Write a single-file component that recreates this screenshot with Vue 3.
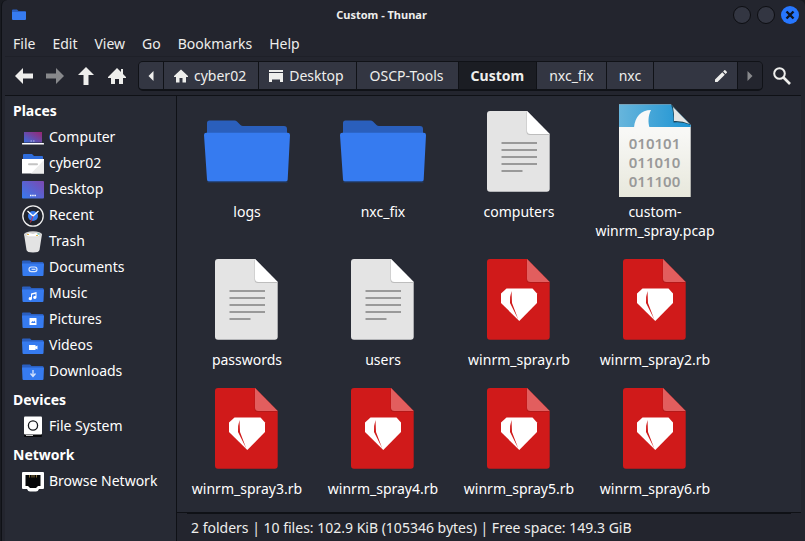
<script setup>
const menus = ['File', 'Edit', 'View', 'Go', 'Bookmarks', 'Help']

const groups = [
  {
    title: 'Places',
    items: [
      { name: 'Computer', icon: 'computer' },
      { name: 'cyber02', icon: 'home' },
      { name: 'Desktop', icon: 'desktop' },
      { name: 'Recent', icon: 'recent' },
      { name: 'Trash', icon: 'trash' },
      { name: 'Documents', icon: 'folder', badge: 'documents' },
      { name: 'Music', icon: 'folder', badge: 'music' },
      { name: 'Pictures', icon: 'folder', badge: 'pictures' },
      { name: 'Videos', icon: 'folder', badge: 'videos' },
      { name: 'Downloads', icon: 'folder', badge: 'downloads' },
    ],
  },
  { title: 'Devices', items: [{ name: 'File System', icon: 'drive' }] },
  { title: 'Network', items: [{ name: 'Browse Network', icon: 'network' }] },
]

const files = [
  { name: 'logs', type: 'folder' },
  { name: 'nxc_fix', type: 'folder' },
  { name: 'computers', type: 'text' },
  { name: 'custom-winrm_spray.pcap', type: 'pcap' },
  { name: 'passwords', type: 'text' },
  { name: 'users', type: 'text' },
  { name: 'winrm_spray.rb', type: 'ruby' },
  { name: 'winrm_spray2.rb', type: 'ruby' },
  { name: 'winrm_spray3.rb', type: 'ruby' },
  { name: 'winrm_spray4.rb', type: 'ruby' },
  { name: 'winrm_spray5.rb', type: 'ruby' },
  { name: 'winrm_spray6.rb', type: 'ruby' },
]

const binaryRows = [
  { y: 46, bits: '010101' },
  { y: 65, bits: '011010' },
  { y: 84, bits: '011100' },
]
</script>

<template>
  <div class="window">
    <header class="titlebar">
      <svg class="app-icon" viewBox="0 0 14 12">
        <path d="M0 1.500Q0 .5 1 .5h4l1.500 1.500H13q1 0 1 1V6H0z" fill="#2a5fc0" />
        <path d="M0 3h14v7q0 1-1 1H1q-1 0-1-1z" fill="#367bf0" />
      </svg>
      <h1 class="title">Custom - Thunar</h1>
      <div class="controls">
        <button class="control" aria-label="Minimize"></button>
        <button class="control" aria-label="Maximize"></button>
        <button class="control close" aria-label="Close">
          <svg viewBox="0 0 18 18"><path d="M5.500 5.500l7 7M12.500 5.500l-7 7" stroke="#10141f" stroke-width="2.400" /></svg>
        </button>
      </div>
    </header>

    <nav class="menubar">
      <button v-for="menu in menus" :key="menu" class="menu">{{ menu }}</button>
    </nav>

    <div class="toolbar">
      <button class="tool" aria-label="Back">
        <svg viewBox="0 0 18 18"><path d="M0 9l8-8v5.500h10v5H8V17z" /></svg>
      </button>
      <button class="tool" aria-label="Forward" disabled>
        <svg viewBox="0 0 18 18"><path d="M18 9l-8-8v5.500H0v5h10V17z" /></svg>
      </button>
      <button class="tool" aria-label="Up">
        <svg viewBox="0 0 18 18"><path d="M9 0l8 8h-5.500v10h-5V8H1z" /></svg>
      </button>
      <button class="tool" aria-label="Home">
        <svg viewBox="0 0 18 18"><path d="M9 1l4 4V2h2v5l3 3v1h-3v6h-4v-5H7v5H3v-6H0v-1z" /></svg>
      </button>

      <div class="pathbar">
        <button class="crumb scroll" aria-label="Scroll left">
          <svg class="caret" viewBox="0 0 6 10"><path d="M5.500 0v10L0.500 5z" /></svg>
        </button>
        <button class="crumb with-icon">
          <svg class="crumb-icon" viewBox="0 0 14 14"><path d="M7 .5L14 7v1h-2v5.500H8.500V9h-3v4.500H2V8H0V7z" /></svg>
          cyber02
        </button>
        <button class="crumb with-icon">
          <svg class="crumb-icon" viewBox="0 0 14 14"><path d="M0 1h14v2H0zM0 4h14v9h-3v-2.500H3V13H0z" /></svg>
          Desktop
        </button>
        <button class="crumb parent">OSCP-Tools</button>
        <button class="crumb current">Custom</button>
        <button class="crumb">nxc_fix</button>
        <button class="crumb">nxc</button>
        <button class="crumb edit" aria-label="Edit path">
          <svg class="crumb-icon" viewBox="0 0 14 14"><path d="M1 10.500V13h2.500L10.800 5.700 8.300 3.200zM9.100 2.400l2.500 2.500 1.200-1.200q.5-.5 0-1L11.300 1.200q-.5-.5-1 0z" /></svg>
        </button>
        <button class="crumb scroll off" aria-label="Scroll right" disabled>
          <svg class="caret" viewBox="0 0 6 10"><path d="M.5 0v10L5.500 5z" /></svg>
        </button>
      </div>

      <button class="tool search" aria-label="Search">
        <svg viewBox="0 0 18 18">
          <circle cx="6.500" cy="6.500" r="5.300" fill="none" stroke="#eeeeec" stroke-width="2" />
          <path d="M10.500 10.500l6.500 6.500" stroke="#eeeeec" stroke-width="2.600" />
        </svg>
      </button>
    </div>

    <div class="body">
      <aside class="sidebar">
        <section v-for="group in groups" :key="group.title">
          <h2 class="group-title">{{ group.title }}</h2>
          <a v-for="item in group.items" :key="item.name" class="place" href="#">
            <svg class="place-icon" viewBox="0 0 22 22">
              <g v-if="item.icon === 'computer'">
                <rect x="2" y="5" width="18" height="10.500" fill="url(#screen)" />
                <path d="M8.500 14h1.500M11 14h1.500" stroke="#b9bfe6" />
                <rect y="16" width="22" height="1.500" rx=".5" fill="#fff" />
              </g>
              <g v-else-if="item.icon === 'home'">
                <path d="M1 2q0-1 1-1h8l2 2h8q1 0 1 1v5H1z" fill="#2f6ddb" />
                <path d="M0 6h22v14.500H0z" fill="#fff" />
                <path d="M22 7v13.500H9z" fill="#ececec" />
                <rect x="6" y="10.300" width="10" height="2" rx="1" fill="#c4c4c4" />
              </g>
              <g v-else-if="item.icon === 'desktop'">
                <rect y="2" width="22" height="17.500" rx="1" fill="url(#wall)" />
                <path d="M8 16.500h6" stroke="#fff" stroke-width="1.400" stroke-dasharray="1.500 .7" />
              </g>
              <g v-else-if="item.icon === 'recent'">
                <circle cx="11" cy="11" r="10.200" fill="#20232c" stroke="#f0f0f0" stroke-width="1.300" />
                <circle cx="11" cy="11" r="5" fill="#367bf0" />
                <path d="M5.500 6l5.500 5 5.500-5" fill="none" stroke="#fff" stroke-width="1.300" />
                <path d="M11 11l-2.500 6.500" stroke="#c4304a" />
              </g>
              <g v-else-if="item.icon === 'trash'">
                <path d="M2 3l2.500 16q.5 2.500 6.500 2.500t6.500-2.500L20 3z" fill="#e3e3e3" />
                <ellipse cx="11" cy="3.300" rx="9" ry="3" fill="#d2d2d2" />
                <path d="M4 4l3-2 4 1 3-1 4 2-2 1.500H6z" fill="#fff" />
                <path d="M5 3.500h2M14 4.500h2" stroke="#e3b64b" />
                <path d="M15.500 3h2" stroke="#3bb3a5" />
              </g>
              <g v-else-if="item.icon === 'drive'">
                <path d="M2 17h18v3q0 1-1 1H3q-1 0-1-1z" fill="#08090c" />
                <path d="M4 19.500h7" stroke="#c8c8c8" />
                <rect x="2" y=".5" width="18" height="18" rx="1" fill="#fff" />
                <circle cx="11" cy="9.500" r="4.600" fill="none" stroke="#15171c" stroke-width="1.300" />
              </g>
              <g v-else-if="item.icon === 'network'">
                <path d="M1 1h20q1 0 1 1v15q0 1-1 1h-4q-1 2.500-3 2.500H8Q6 20.500 5 18H1q-1 0-1-1V2q0-1 1-1z" fill="#fff" />
                <path d="M3.500 4h15v11H16l-2 2H8l-2-2H3.500z" fill="#050608" />
                <path d="M7.500 4v2.500M10 4v2.500M12 4v2.500M14.500 4v2.500" stroke="#a58a4a" stroke-width=".8" />
              </g>
              <g v-else>
                <path d="M0 4.500q0-1 1-1h7l1.500 1.500H20.500q1 0 1 1V9H.3z" fill="#2a5fc0" />
                <path d="M0 6.500h22L21.500 18q0 1-1 1h-19q-1 0-1-1z" fill="#367bf0" />
                <g v-if="item.badge === 'documents'" fill="none" stroke="#dbe7fd" stroke-width="1.200">
                  <rect x="7" y="10" width="8" height="4.600" rx="2.300" />
                  <path d="M13.500 12.300H9.500" />
                </g>
                <path v-else-if="item.badge === 'music'" d="M9 10.500l5.500-1.500v5.500a1.700 1.500 0 1 1-1-1.400v-2.300L10 11.700v4a1.700 1.500 0 1 1-1-1.400z" fill="#fff" />
                <g v-else-if="item.badge === 'pictures'">
                  <rect x="7.500" y="9" width="7" height="7" rx=".5" fill="#fff" />
                  <path d="M9 14l1.500-2 1 1 .8-1.500L13.500 14z" fill="#367bf0" />
                </g>
                <path v-else-if="item.badge === 'videos'" d="M7 10h6.500v1.500L15.500 10.500v4L13.500 13.500V15H7z" fill="#fff" />
                <path v-else d="M11 9v6M8.500 12.500l2.500 3 2.500-3" fill="none" stroke="#d4e2fc" stroke-width="1.300" />
              </g>
            </svg>
            {{ item.name }}
          </a>
        </section>
      </aside>

      <div class="main">
        <main class="files">
          <button v-for="file in files" :key="file.name" class="file">
            <svg class="file-icon" viewBox="0 0 96 96">
              <g v-if="file.type === 'folder'">
                <path d="M8 34V20q0-2.500 2.500-2.500h25q1.500 0 2.500 1l3.500 3.500q1 1 2.500 1h41q3 0 3 3v8z" fill="#2a5fbc" />
                <path d="M5 32q0-2.300 2.300-2.300h81.400q2.300 0 2.300 2.300l-2.300 44.500q0 2-2 2H10q-2 0-2-2z" fill="#367bf0" />
                <path d="M8.500 79h80" stroke="#20427c" stroke-width=".8" />
              </g>
              <g v-else-if="file.type === 'text'">
                <path d="M19 8h37l22.700 23v54.700q0 3-3 3H19q-3 0-3-3V11q0-3 3-3z" fill="#e4e4e4" />
                <path d="M55.500 8.500v20q0 3.500 3.500 3.500h19.500z" fill="#bdbdbd" />
                <path d="M56 8v19.500q0 3.500 3.500 3.500h19.200z" fill="#fff" />
                <path d="M30.500 40h35.500M30.500 47h35.500M30.500 54h35.500M30.500 61h35.500M30.500 68h21" stroke="#999" stroke-width="1.800" />
              </g>
              <g v-else-if="file.type === 'ruby'">
                <path d="M19 8h37l22.700 23v54.700q0 3-3 3H19q-3 0-3-3V11q0-3 3-3z" fill="#d01a1a" />
                <path d="M55.500 8.500v20q0 3.500 3.500 3.500h19.500z" fill="#b51818" />
                <path d="M56 8v19.500q0 3.500 3.500 3.500h19.200z" fill="#e25e5e" />
                <path d="M35.500 37.500h26l4.500 5v9.500L48.300 70 30 52v-9.500z" fill="#fff" />
                <path d="M40.500 40q-2 6-1.500 12l8.300 16.500L41 52z" fill="#d01a1a" />
              </g>
              <g v-else>
                <path d="M12 1.500h52L83.700 22v72H12z" fill="url(#paper)" />
                <path d="M12 1.500h52L83.700 22v2H12z" fill="url(#sea)" />
                <path d="M27 24.500C28 14 34 7 44 7c-3 6-3 12-1.500 17.500z" fill="#f8f8f8" />
                <path d="M64 1.500q3 8 2.500 18 9-1 17.200 2.500z" fill="#1b4659" />
                <path d="M66 4q1.500 7 1 14 8-.5 15.500 3z" fill="#e6e6e4" />
                <text v-for="row in binaryRows" :key="row.bits" class="bits" x="47.500" :y="row.y" text-anchor="middle">{{ row.bits }}</text>
              </g>
            </svg>
            <span class="file-name">
              <template v-if="file.type === 'pcap'">custom-<wbr />winrm_spray.pcap</template>
              <template v-else>{{ file.name }}</template>
            </span>
          </button>
        </main>
        <footer class="status">
          <p class="summary">2 folders | 10 files: 102.9 KiB (105346 bytes) | Free space: 149.3 GiB</p>
        </footer>
      </div>
    </div>

    <svg class="defs" aria-hidden="true">
      <defs>
        <linearGradient id="screen" x1="0" y1="1" x2="1" y2="0">
          <stop offset="0" stop-color="#3a6fe0" />
          <stop offset="1" stop-color="#9a2470" />
        </linearGradient>
        <linearGradient id="wall" x1="0" y1="1" x2="1" y2="0">
          <stop offset="0" stop-color="#367bf0" />
          <stop offset="1" stop-color="#7d48b0" />
        </linearGradient>
        <linearGradient id="sea" x1="0" y1="0" x2="1" y2="0">
          <stop offset="0" stop-color="#67b5dc" />
          <stop offset="1" stop-color="#1b93d3" />
        </linearGradient>
        <linearGradient id="paper" x1="0" y1="0" x2="0" y2="1">
          <stop offset="0.300" stop-color="#f8f8f6" />
          <stop offset="1" stop-color="#e8e8dc" />
        </linearGradient>
      </defs>
    </svg>
  </div>
</template>

<style>
body {
  background: #191b21;
}
</style>

<style scoped>
.window {
  box-sizing: border-box;
  display: flex;
  flex-direction: column;
  min-height: 100vh;
  margin-left: 1px;
  border-left: 1px solid #0f1116;
  border-radius: 6px 6px 0 0;
  background: #23252e;
  color: #eeeeec;
  font: 14px/19px "Noto Sans", sans-serif;
}
button {
  margin: 0;
  padding: 0;
  border: 0;
  background: none;
  color: inherit;
  font: inherit;
}
svg {
  display: block;
}
.titlebar {
  display: flex;
  align-items: center;
  height: 30px;
  padding: 0 6px 0 10px;
}
.app-icon {
  width: 14px;
  height: 12px;
}
.title {
  flex: 1;
  margin: 0;
  padding-left: 4px;
  font-size: 11px;
  font-weight: 700;
  line-height: 18px;
  text-align: center;
}
.controls {
  display: flex;
  gap: 6px;
}
.control {
  box-sizing: border-box;
  width: 18px;
  height: 18px;
  border: 1px solid #0d0e12;
  border-radius: 50%;
  background: #333642;
}
.close {
  border: 0;
  background: #2777ff;
}
.menubar {
  display: flex;
  gap: 17px;
  height: 26px;
  margin: 0 4px 0 3px;
  padding: 0 8px;
  border-bottom: 1px solid #1e2028;
}
.toolbar {
  display: flex;
  align-items: center;
  height: 38px;
  margin: 0 4px 0 3px;
  padding-left: 3px;
  border-bottom: 1px solid #0f1116;
}
.tool {
  display: flex;
  justify-content: center;
  width: 31px;
  fill: #eeeeec;
}
.tool:disabled {
  fill: #88898c;
}
.tool svg {
  width: 18px;
  height: 18px;
}
.search {
  width: 38px;
}
.pathbar {
  box-sizing: border-box;
  display: flex;
  flex: 1;
  height: 30px;
  margin-left: 6px;
  border: 1px solid #101217;
  border-bottom-width: 2px;
  border-radius: 5px;
  overflow: hidden;
}
.crumb {
  display: flex;
  align-items: center;
  gap: 6px;
  padding: 0 12px;
  border-right: 1px solid #101217;
  background: #333642;
  fill: #eeeeec;
}
.crumb.with-icon {
  padding-left: 10px;
}
.crumb.parent {
  padding: 0 14px 0 13px;
}
.crumb-icon {
  width: 14px;
  height: 14px;
}
.caret {
  width: 6px;
  height: 10px;
}
.crumb.scroll {
  padding: 0 9px;
}
.crumb.current {
  background: #1b1d23;
  font-weight: 700;
}
.crumb.edit {
  flex: 1;
  justify-content: flex-end;
  padding: 0 9px;
}
.crumb.off {
  border: 0;
  background: #23252e;
  fill: #88898c;
}
.body {
  display: flex;
  flex: 1;
  margin: 0 4px 0 3px;
}
.sidebar {
  box-sizing: border-box;
  width: 172px;
  border-right: 1px solid #0f1116;
  background: #272a34;
  color: #fff;
}
.group-title {
  margin: 0;
  padding-left: 8px;
  font-size: 14px;
  font-weight: 700;
  line-height: 29px;
}
.place {
  display: flex;
  align-items: flex-start;
  gap: 5px;
  height: 26px;
  padding-left: 17px;
  color: inherit;
  line-height: 24px;
  text-decoration: none;
}
.place-icon {
  width: 22px;
  height: 22px;
  margin-top: 2px;
}
.main {
  display: flex;
  flex: 1;
  flex-direction: column;
}
.files {
  display: grid;
  flex: 1;
  grid-template-columns: repeat(auto-fill, 136px);
  row-gap: 11px;
  align-content: start;
  padding: 7px 2px 0;
  background: #272a34;
  color: #fff;
}
.file {
  display: flex;
  flex-direction: column;
  align-items: center;
  gap: 3px;
}
.file-icon {
  width: 96px;
  height: 96px;
}
.file-name {
  text-align: center;
}
.bits {
  fill: #999;
  font: 600 15px "Noto Sans", sans-serif;
}
.status {
  padding: 0 10px;
  border-top: 1px solid #0f1116;
}
.summary {
  margin: 0;
  padding: 4px;
  border-top: 1px solid #0f1116;
}
.defs {
  position: absolute;
  width: 0;
  height: 0;
}
</style>
